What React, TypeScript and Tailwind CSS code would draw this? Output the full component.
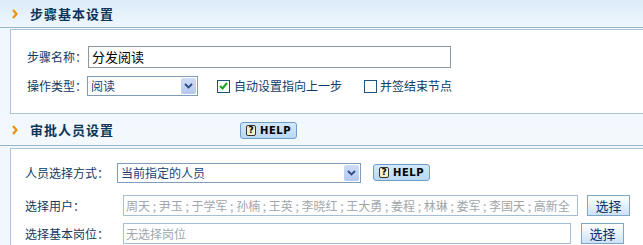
import React from "react";

const font = "font-['SimSun','Noto_Sans_CJK_SC',sans-serif]";

const Arrow = () => (
  <svg className="ml-[12px] mr-[12px] flex-none" width="6" height="10" viewBox="0 0 6 10">
    <path d="M1 1l3.5 4L1 9" stroke="#f0900a" strokeWidth="2.2" fill="none" />
  </svg>
);

const HelpButton = ({ className = "" }: { className?: string }) => (
  <span
    className={`flex-none inline-flex items-center gap-[4px] h-[17px] w-[57px] px-[5px] rounded-[3px] border border-[#6d9ecb] bg-gradient-to-b from-[#d3e8fa] to-[#b9d8f3] ${className}`}
  >
    <span className="w-[11px] h-[11px] rounded-[2px] border border-[#333] bg-[#f6f1c8] text-[9px] font-bold leading-[9px] text-center text-black font-['DejaVu_Sans',sans-serif]">
      ?
    </span>
    <span className="text-[10px] font-bold tracking-[0.5px] text-black font-['DejaVu_Sans',sans-serif]">HELP</span>
  </span>
);

const SelectBox = ({ value, width }: { value: string; width: string }) => (
  <div className={`flex-none h-[20px] ${width} flex items-center border border-[#7f9db9] bg-white`}>
    <span className="flex-1 pl-[3px] text-[12px] text-[#1b3f7a]">{value}</span>
    <span className="w-[15px] h-[16px] mr-[1px] flex items-center justify-center rounded-[2px] bg-gradient-to-b from-[#cfdcf7] to-[#b4c8f0]">
      <svg width="9" height="6" viewBox="0 0 9 6">
        <path d="M1 1l3.5 3.5L8 1" stroke="#2c4d85" strokeWidth="1.8" fill="none" />
      </svg>
    </span>
  </div>
);

const CheckBox = ({ checked }: { checked?: boolean }) => (
  <span className="flex-none w-[13px] h-[13px] flex items-center justify-center border border-[#1c5180] bg-white">
    {checked && (
      <svg width="9" height="8" viewBox="0 0 9 8">
        <path d="M1 4l2.5 2.5L8 1" stroke="#21a121" strokeWidth="2" fill="none" />
      </svg>
    )}
  </span>
);

const PickButton = ({ className = "" }: { className?: string }) => (
  <button
    className={`flex-none h-[21px] w-[43px] p-0 border border-[#7ea6c9] bg-gradient-to-b from-white to-[#cde2f5] text-[13px] text-[#0a2f6b] ${className}`}
  >
    选择
  </button>
);

const users = ["周天", "尹玉", "于学军", "孙楠", "王英", "李晓红", "王大勇", "姜程", "林琳", "娄军", "李国天", "高新全"];

export default function App() {
  return (
    <div className={`w-[643px] h-[245px] overflow-hidden bg-[#f1f7fc] ${font}`}>
      {/* step settings */}
      <div className="h-[28px] flex items-center bg-gradient-to-b from-[#dcebf8] to-[#eff7fd] border-b border-[#98b6c8]">
        <Arrow />
        <span className="text-[13px] font-bold text-[#0e3557] tracking-[1px]">步骤基本设置</span>
      </div>
      <div className="ml-[10px] mt-[1px] w-[700px] h-[85px] border border-[#a8c5dc] bg-white pt-[16px] pl-[16px]">
        <div className="flex items-center h-[22px]">
          <span className="flex-none w-[61px] text-[12px] text-[#123a62]">步骤名称：</span>
          <div className="flex-none h-[22px] w-[363px] border border-[#8c979f] flex items-center pl-[3px] text-[13px] text-black">
            分发阅读
          </div>
        </div>
        <div className="flex items-center mt-[8px] h-[20px]">
          <span className="flex-none w-[60px] text-[12px] text-[#123a62]">操作类型：</span>
          <SelectBox value="阅读" width="w-[111px]" />
          <span className="ml-[19px]"><CheckBox checked /></span>
          <span className="ml-[4px] text-[12px] text-[#123a62]">自动设置指向上一步</span>
          <span className="ml-[22px]"><CheckBox /></span>
          <span className="ml-[3px] text-[12px] text-[#123a62]">并签结束节点</span>
        </div>
      </div>

      {/* approver settings */}
      <div className="mt-[1px] h-[31px] flex items-center bg-gradient-to-b from-[#f1f8fe] to-[#f3f8fc] border-b border-[#98b6c8]">
        <Arrow />
        <span className="text-[13px] font-bold text-[#0e3557] tracking-[1px]">审批人员设置</span>
        <HelpButton className="ml-[126px]" />
      </div>
      <div className="ml-[10px] mt-[2px] w-[700px] h-[120px] border border-[#a8c5dc] bg-white pt-[14px] pl-[14px]">
        <div className="flex items-center h-[20px]">
          <span className="flex-none w-[92px] text-[12px] text-[#123a62]">人员选择方式：</span>
          <SelectBox value="当前指定的人员" width="w-[244px]" />
          <HelpButton className="ml-[12px] -mt-[2px]" />
        </div>
        <div className="flex items-center mt-[12px] h-[21px]">
          <span className="flex-none w-[98px] text-[12px] text-[#123a62]">选择用户：</span>
          <div className="flex-none h-[21px] w-[455px] border border-[#a5bfd8] flex items-center pl-[2px] text-[12px] text-[#a0a6ab] whitespace-nowrap overflow-hidden">
            {users.join(" ; ")}
          </div>
          <PickButton className="ml-[9px]" />
        </div>
        <div className="flex items-center mt-[7px] h-[21px]">
          <span className="flex-none w-[98px] text-[12px] text-[#123a62]">选择基本岗位：</span>
          <div className="flex-none h-[21px] w-[448px] border border-[#a5bfd8] flex items-center pl-[2px] text-[12px] text-[#a0a6ab]">
            无选择岗位
          </div>
          <PickButton className="ml-[10px]" />
        </div>
      </div>
    </div>
  );
}
